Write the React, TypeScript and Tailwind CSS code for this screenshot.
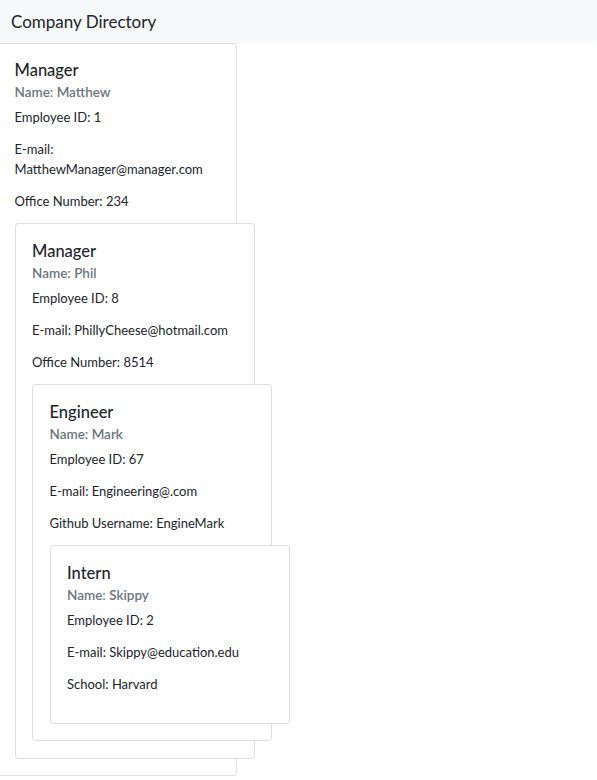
type Employee = {
  role: string;
  name: string;
  id: number;
  email: string;
  extraLabel: string;
  extraValue: string;
};

const team: Employee[] = [
  { role: "Manager", name: "Matthew", id: 1, email: "MatthewManager@manager.com", extraLabel: "Office Number", extraValue: "234" },
  { role: "Manager", name: "Phil", id: 8, email: "PhillyCheese@hotmail.com", extraLabel: "Office Number", extraValue: "8514" },
  { role: "Engineer", name: "Mark", id: 67, email: "Engineering@.com", extraLabel: "Github Username", extraValue: "EngineMark" },
  { role: "Intern", name: "Skippy", id: 2, email: "Skippy@education.edu", extraLabel: "School", extraValue: "Harvard" },
];

function EmployeeCard({ people, first }: { people: Employee[]; first?: boolean }) {
  const [person, ...rest] = people;
  return (
    <div
      className={`w-[240px] shrink-0 rounded-[4px] border border-[rgba(0,0,0,0.125)] bg-white px-[16.5px] pb-[16.5px] ${
        first ? "ml-[-3px] pt-[15.5px]" : "pt-[16.5px]"
      }`}
    >
      <h5 className="mb-[3px] text-[16.5px] leading-[21px] font-medium text-[#212529]">{person.role}</h5>
      <h6 className="mb-[6.5px] text-[13.5px] leading-[17px] font-semibold text-[#6c757d]">Name: {person.name}</h6>
      <p className="mb-[12px] leading-[20px]">Employee ID: {person.id}</p>
      <p className="mb-[12px] leading-[20px]">E-mail: {person.email}</p>
      <p className="mb-[12px] leading-[20px]">
        {person.extraLabel}: {person.extraValue}
      </p>
      {rest.length > 0 && <EmployeeCard people={rest} />}
    </div>
  );
}

export default function App() {
  return (
    <div className="min-h-screen bg-white text-[13px] text-[#212529] [font-family:Lato,sans-serif]">
      <header className="flex h-[43px] items-center bg-[#f8f9fa] px-[11px]">
        <span className="text-[17px]">Company Directory</span>
      </header>
      <EmployeeCard people={team} first />
    </div>
  );
}
